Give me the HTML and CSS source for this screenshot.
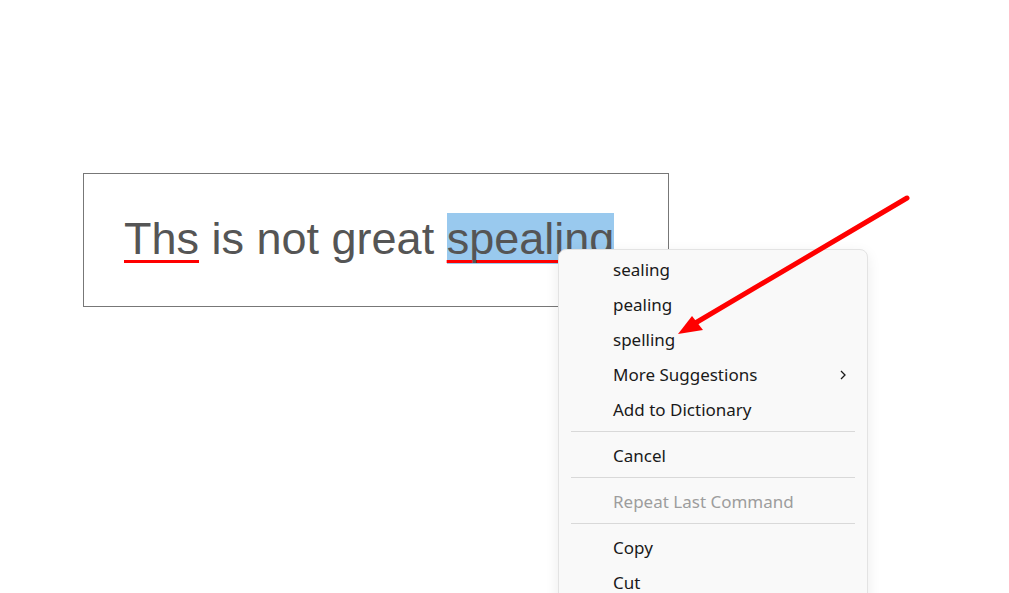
FILE: index.html
```html
<!DOCTYPE html>
<html lang="en">
<head>
    <meta charset="UTF-8">
    <title>Spell Check</title>
    <link rel="stylesheet" href="styles.css">
</head>
<body>

<div class="page">
    <!-- Text field with misspelled words -->
    <div class="field">
        <span class="typo">Ths</span> is not great <span class="typo selected">spealing</span>
    </div>

    <!-- Context menu -->
    <div class="menu">
        <div class="item">sealing</div>
        <div class="item">pealing</div>
        <div class="item">spelling</div>
        <div class="item">More Suggestions
            <svg class="chevron" width="8" height="10" viewBox="0 0 8 10">
                <path d="M2 1 L6 5 L2 9" fill="none" stroke="#1a1a1a" stroke-width="1.3"/>
            </svg>
        </div>
        <div class="item">Add to Dictionary</div>
        <div class="separator"></div>
        <div class="item">Cancel</div>
        <div class="separator"></div>
        <div class="item disabled">Repeat Last Command</div>
        <div class="separator"></div>
        <div class="item">Copy</div>
        <div class="item">Cut</div>
    </div>

    <!-- Annotation arrow -->
    <svg class="arrow" width="1009" height="593" viewBox="0 0 1009 593">
        <line x1="907" y1="198" x2="692" y2="325" stroke="#ff0000" stroke-width="5" stroke-linecap="round"/>
        <polygon points="678,334 692,316 703,330" fill="#ff0000"/>
    </svg>
</div>

</body>
</html>
```

FILE: styles.css
```css
body {
    margin: 0;
    padding: 0;
    background-color: #fff;
    overflow: hidden;
}
.page {
    position: relative;
    width: 1009px;
    height: 593px;
    overflow: hidden;
}
.field {
    box-sizing: border-box;
    width: 586px;
    height: 134px;
    margin: 173px 0 0 83px;
    padding: 39px 40px 0;
    border: 1px solid #777;
    font-family: "Liberation Sans", Arial, sans-serif;
    font-size: 45px;
    color: #555;
    white-space: nowrap;
}
.typo {
    text-decoration: underline;
    text-decoration-color: #ff0000;
    text-decoration-thickness: 3px;
    text-decoration-skip-ink: none;
    text-underline-offset: 6px;
}
.selected {
    background-color: #99c9ee;
}
.menu {
    position: absolute;
    left: 558px;
    top: 249px;
    box-sizing: border-box;
    width: 310px;
    height: 360px;
    padding-top: 2px;
    background-color: #f9f9f9;
    border: 1px solid #e3e3e3;
    border-radius: 8px;
    box-shadow: 0 4px 14px rgba(0, 0, 0, 0.08);
    font-family: "Noto Sans", sans-serif;
    font-size: 17px;
    color: #1a1a1a;
}
.item {
    display: flex;
    align-items: center;
    height: 35px;
    padding-left: 54px;
    padding-right: 20px;
}
.item.disabled {
    color: #9d9d9d;
}
.chevron {
    margin-left: auto;
}
.separator {
    height: 1px;
    margin: 4px 12px 6px;
    background-color: #d9d9d9;
}
.arrow {
    position: absolute;
    left: 0;
    top: 0;
}
```
